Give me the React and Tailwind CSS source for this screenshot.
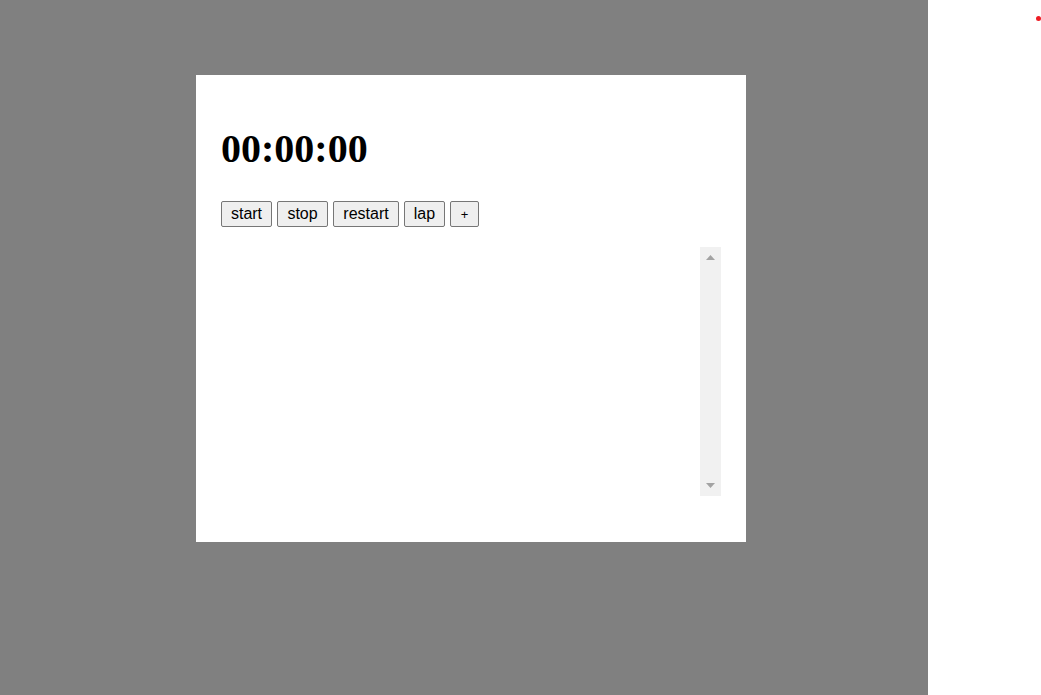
export default function App() {
  const btn =
    "h-[26px] rounded-[2px] border border-[#767676] bg-[#efefef] text-[16px] leading-none text-black flex items-center justify-center";
  return (
    <div className="flex h-[695px] w-[1041px] overflow-hidden" style={{ fontFamily: '"Liberation Sans", Arial, sans-serif' }}>
      <div className="w-[928px] h-full bg-[#808080] pt-[75px] pl-[196px]">
        <div className="w-[550px] h-[467px] bg-white pl-[25px] pr-[25px] flex flex-col">
          <h1
            className="mt-[51px] h-[46px] text-[40px] font-bold leading-[46px] text-black"
            style={{ fontFamily: '"Liberation Serif", "Times New Roman", serif' }}
          >
            00:00:00
          </h1>
          <div className="mt-[29px] flex gap-[5px]">
            <button className={`${btn} w-[51px]`}>start</button>
            <button className={`${btn} w-[51px]`}>stop</button>
            <button className={`${btn} w-[66px]`}>restart</button>
            <button className={`${btn} w-[41px]`}>lap</button>
            <button className={`${btn} w-[29px] !text-[13px]`}>+</button>
          </div>
          <div className="mt-[20px] flex h-[249px] w-[500px]">
            <div className="flex-1" />
            <div className="flex w-[21px] flex-col items-center justify-between bg-[#f1f1f1] py-[8px]">
              <svg width="9" height="5" viewBox="0 0 9 5">
                <polygon points="4.5,0 9,5 0,5" fill="#a3a3a3" />
              </svg>
              <svg width="9" height="5" viewBox="0 0 9 5">
                <polygon points="0,0 9,0 4.5,5" fill="#a3a3a3" />
              </svg>
            </div>
          </div>
        </div>
      </div>
      <div className="relative flex-1 bg-white">
        <div className="absolute left-[108px] top-[16px] h-[5px] w-[5px] rounded-full bg-[#ee1c24]" />
      </div>
    </div>
  );
}
